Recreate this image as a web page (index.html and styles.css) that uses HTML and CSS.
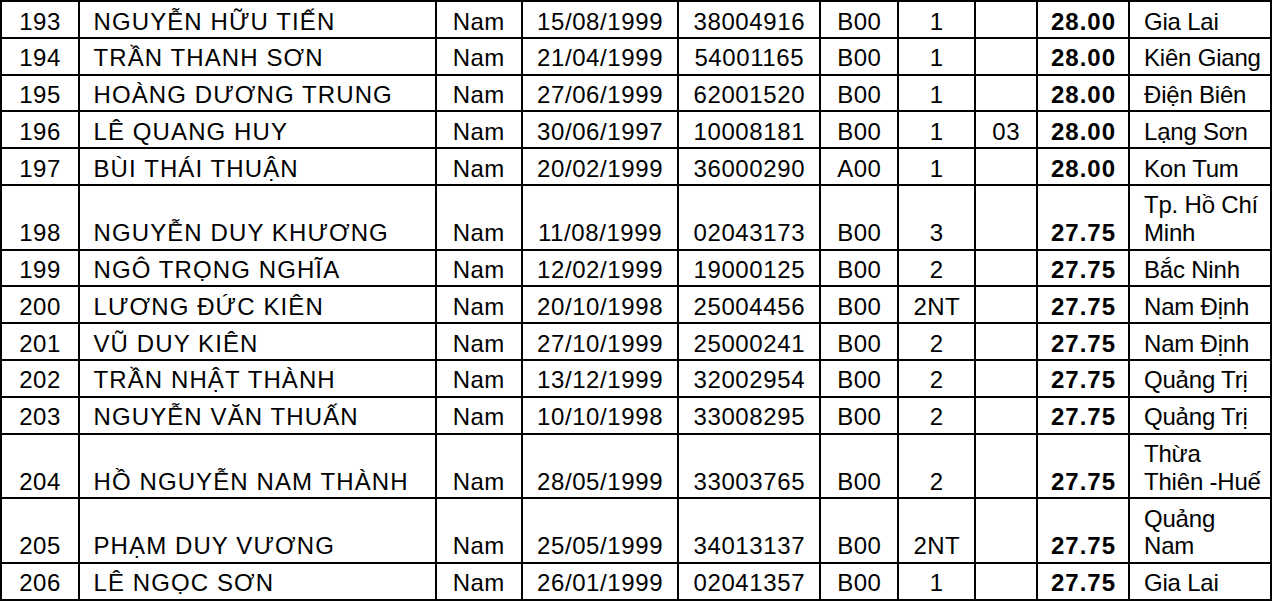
FILE: index.html
```html
<!DOCTYPE html>
<html lang="vi">
<head>
<meta charset="utf-8">
<title>Danh sách</title>
<link rel="stylesheet" href="styles.css">
</head>
<body>
<table class="list">
  <colgroup>
    <col class="c-stt"><col class="c-name"><col class="c-sex"><col class="c-dob"><col class="c-sbd"><col class="c-khoi"><col class="c-kv"><col class="c-dt"><col class="c-diem"><col class="c-tinh">
  </colgroup>
  <tbody>
    <tr><td class="num">193</td><td class="name">NGUYỄN HỮU TIẾN</td><td class="ct">Nam</td><td class="num">15/08/1999</td><td class="num">38004916</td><td class="ct">B00</td><td class="ct">1</td><td class="num"></td><td class="score">28.00</td><td class="prov">Gia Lai</td></tr>
    <tr><td class="num">194</td><td class="name">TRẦN THANH SƠN</td><td class="ct">Nam</td><td class="num">21/04/1999</td><td class="num">54001165</td><td class="ct">B00</td><td class="ct">1</td><td class="num"></td><td class="score">28.00</td><td class="prov">Kiên Giang</td></tr>
    <tr><td class="num">195</td><td class="name">HOÀNG DƯƠNG TRUNG</td><td class="ct">Nam</td><td class="num">27/06/1999</td><td class="num">62001520</td><td class="ct">B00</td><td class="ct">1</td><td class="num"></td><td class="score">28.00</td><td class="prov">Điện Biên</td></tr>
    <tr><td class="num">196</td><td class="name">LÊ QUANG HUY</td><td class="ct">Nam</td><td class="num">30/06/1997</td><td class="num">10008181</td><td class="ct">B00</td><td class="ct">1</td><td class="num">03</td><td class="score">28.00</td><td class="prov">Lạng Sơn</td></tr>
    <tr><td class="num">197</td><td class="name">BÙI THÁI THUẬN</td><td class="ct">Nam</td><td class="num">20/02/1999</td><td class="num">36000290</td><td class="ct">A00</td><td class="ct">1</td><td class="num"></td><td class="score">28.00</td><td class="prov">Kon Tum</td></tr>
    <tr><td class="num">198</td><td class="name">NGUYỄN DUY KHƯƠNG</td><td class="ct">Nam</td><td class="num">11/08/1999</td><td class="num">02043173</td><td class="ct">B00</td><td class="ct">3</td><td class="num"></td><td class="score">27.75</td><td class="prov">Tp. Hồ Chí<br>Minh</td></tr>
    <tr><td class="num">199</td><td class="name">NGÔ TRỌNG NGHĨA</td><td class="ct">Nam</td><td class="num">12/02/1999</td><td class="num">19000125</td><td class="ct">B00</td><td class="ct">2</td><td class="num"></td><td class="score">27.75</td><td class="prov">Bắc Ninh</td></tr>
    <tr><td class="num">200</td><td class="name">LƯƠNG ĐỨC KIÊN</td><td class="ct">Nam</td><td class="num">20/10/1998</td><td class="num">25004456</td><td class="ct">B00</td><td class="ct">2NT</td><td class="num"></td><td class="score">27.75</td><td class="prov">Nam Định</td></tr>
    <tr><td class="num">201</td><td class="name">VŨ DUY KIÊN</td><td class="ct">Nam</td><td class="num">27/10/1999</td><td class="num">25000241</td><td class="ct">B00</td><td class="ct">2</td><td class="num"></td><td class="score">27.75</td><td class="prov">Nam Định</td></tr>
    <tr><td class="num">202</td><td class="name">TRẦN NHẬT THÀNH</td><td class="ct">Nam</td><td class="num">13/12/1999</td><td class="num">32002954</td><td class="ct">B00</td><td class="ct">2</td><td class="num"></td><td class="score">27.75</td><td class="prov">Quảng Trị</td></tr>
    <tr><td class="num">203</td><td class="name">NGUYỄN VĂN THUẤN</td><td class="ct">Nam</td><td class="num">10/10/1998</td><td class="num">33008295</td><td class="ct">B00</td><td class="ct">2</td><td class="num"></td><td class="score">27.75</td><td class="prov">Quảng Trị</td></tr>
    <tr><td class="num">204</td><td class="name">HỒ NGUYỄN NAM THÀNH</td><td class="ct">Nam</td><td class="num">28/05/1999</td><td class="num">33003765</td><td class="ct">B00</td><td class="ct">2</td><td class="num"></td><td class="score">27.75</td><td class="prov">Thừa<br>Thiên -Huế</td></tr>
    <tr><td class="num">205</td><td class="name">PHẠM DUY VƯƠNG</td><td class="ct">Nam</td><td class="num">25/05/1999</td><td class="num">34013137</td><td class="ct">B00</td><td class="ct">2NT</td><td class="num"></td><td class="score">27.75</td><td class="prov">Quảng<br>Nam</td></tr>
    <tr><td class="num">206</td><td class="name">LÊ NGỌC SƠN</td><td class="ct">Nam</td><td class="num">26/01/1999</td><td class="num">02041357</td><td class="ct">B00</td><td class="ct">1</td><td class="num"></td><td class="score">27.75</td><td class="prov">Gia Lai</td></tr>
  </tbody>
</table>
</body>
</html>
```

FILE: styles.css
```css
html, body {
  margin: 0;
  padding: 0;
  background: #ffffff;
}

.list {
  border-collapse: collapse;
  table-layout: fixed;
  width: 1270px;
  font-family: "Liberation Sans", Arial, sans-serif;
  font-size: 24px;
  line-height: 27.8px;
  color: #000000;
}

.list td {
  border: 2px solid #000;
  padding: 5.5px 0 1.5px 0;
  vertical-align: bottom;
  white-space: nowrap;
  overflow: hidden;
}

.c-stt { width: 77.5px; }
.c-name { width: 357px; }
.c-sex { width: 86px; }
.c-dob { width: 156.5px; }
.c-sbd { width: 142px; }
.c-khoi { width: 78px; }
.c-kv { width: 77px; }
.c-dt { width: 62px; }
.c-diem { width: 92px; }
.c-tinh { width: 141.5px; }

.list td.ct {
  text-align: center;
  letter-spacing: 0.4px;
  text-indent: 0.4px;
}

.list td.num {
  text-align: center;
  letter-spacing: 0.6px;
  text-indent: 0.6px;
}

.list td.name {
  text-align: left;
  padding-left: 14px;
  letter-spacing: 1.1px;
}

.list td.prov {
  text-align: left;
  padding-left: 14px;
  letter-spacing: -0.2px;
}

.list td.score {
  text-align: center;
  font-weight: bold;
  letter-spacing: 1px;
  text-indent: 1px;
}
```
